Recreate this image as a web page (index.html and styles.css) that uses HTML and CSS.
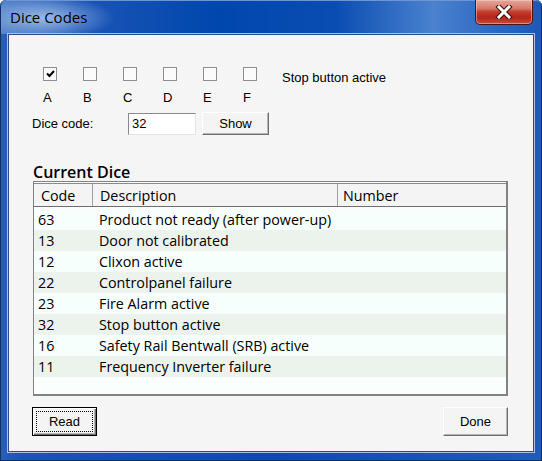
FILE: index.html
```
<!DOCTYPE html>
<html lang="en">
<head>
    <meta charset="UTF-8">
    <title>Dice Codes</title>
    <link rel="stylesheet" href="styles.css">
</head>
<body>

<div class="window">
    <div class="titlebar">
        <span class="title">Dice Codes</span>
        <button class="close" title="Close">
            <svg width="20" height="14" viewBox="0 0 20 14">
                <path d="M5 2 L15 12 M15 2 L5 12" stroke="#3a1010" stroke-width="5" stroke-linecap="square"/>
                <path d="M5 2 L15 12 M15 2 L5 12" stroke="#fff" stroke-width="3" stroke-linecap="square"/>
            </svg>
        </button>
    </div>

    <div class="client">
        <!-- dice selection -->
        <div class="dice-row">
            <div class="die">
                <span class="box">
                    <svg width="9" height="8" viewBox="0 0 9 8"><path d="M1 3.5 L3.5 6 L8 1" stroke="#000" stroke-width="2" fill="none"/></svg>
                </span>
                <span class="letter">A</span>
            </div>
            <div class="die"><span class="box"></span><span class="letter">B</span></div>
            <div class="die"><span class="box"></span><span class="letter">C</span></div>
            <div class="die"><span class="box"></span><span class="letter">D</span></div>
            <div class="die"><span class="box"></span><span class="letter">E</span></div>
            <div class="die"><span class="box"></span><span class="letter">F</span></div>
            <div class="stop-label">Stop button active</div>
        </div>

        <div class="code-row">
            <label for="dice-code">Dice code:</label>
            <input type="text" id="dice-code" value="32">
            <button class="btn show">Show</button>
        </div>

        <h3>Current Dice</h3>
        <div class="list">
            <div class="list-head">
                <div class="col-code">Code</div>
                <div class="col-desc">Description</div>
                <div class="col-num">Number</div>
            </div>
            <div class="list-body">
                <div class="row"><div class="col-code">63</div><div class="col-desc">Product not ready (after power-up)</div></div>
                <div class="row"><div class="col-code">13</div><div class="col-desc">Door not calibrated</div></div>
                <div class="row"><div class="col-code">12</div><div class="col-desc">Clixon active</div></div>
                <div class="row"><div class="col-code">22</div><div class="col-desc">Controlpanel failure</div></div>
                <div class="row"><div class="col-code">23</div><div class="col-desc">Fire Alarm active</div></div>
                <div class="row"><div class="col-code">32</div><div class="col-desc">Stop button active</div></div>
                <div class="row"><div class="col-code">16</div><div class="col-desc">Safety Rail Bentwall (SRB) active</div></div>
                <div class="row"><div class="col-code">11</div><div class="col-desc">Frequency Inverter failure</div></div>
            </div>
        </div>

        <div class="actions">
            <button class="btn default"><span class="focus">Read</span></button>
            <button class="btn">Done</button>
        </div>
    </div>
</div>

</body>
</html>
```

FILE: styles.css
```
body {
    margin: 0;
    font-family: "Liberation Sans", Arial, sans-serif;
    font-size: 13px;
    color: #000;
    background: #fff;
}
.window {
    width: 542px;
    height: 461px;
    box-sizing: border-box;
    padding: 0 8px 9px 8px;
    border-radius: 6px 6px 0 0;
    background: linear-gradient(to right, #2a5fb8 0%, #1a54b4 4%, #0c4aae 50%, #1f5bb8 100%);
    box-shadow: inset 0 0 0 1px #0f2f66;
    display: flex;
    flex-direction: column;
}
.titlebar {
    height: 34px;
    display: flex;
    align-items: flex-start;
    justify-content: space-between;
    margin: 0 -8px;
    border-radius: 6px 6px 0 0;
    background:
        radial-gradient(ellipse 70px 22px at 45px 18px, rgba(200, 220, 245, 0.7), rgba(200, 220, 245, 0) 100%),
        linear-gradient(to right, #4f7fc8 0%, #1c56b6 14%, #0047ad 40%, #0a4db2 62%, #4a82cf 80%, #2c66bf 92%, #1d58b7 100%);
    box-shadow: inset 0 1px 0 #6d95d3, inset 1px 0 0 #0f2f66, inset -1px 0 0 #0f2f66;
}
.title {
    font-family: "Open Sans", "Noto Sans", sans-serif;
    font-size: 15px;
    color: #000;
    margin: 7px 0 0 10px;
}
.close {
    width: 58px;
    height: 25px;
    margin-right: 9px;
    padding: 0;
    border: 1px solid #4a1610;
    border-top: none;
    border-radius: 0 0 5px 5px;
    background: linear-gradient(to bottom, #e4a699 0%, #d77a6c 35%, #c3392a 50%, #b3271a 75%, #c8503c 100%);
    box-shadow: inset 0 0 0 1px rgba(255, 220, 210, 0.45);
    display: flex;
    align-items: center;
    justify-content: center;
}
.client {
    flex: 1;
    background: #f5f5f5;
    border: 1px solid #2a4c7e;
    box-shadow: 0 0 0 1px #a9c1e6;
    display: flex;
    flex-direction: column;
}
.dice-row {
    display: flex;
    margin: 32px 0 0 34px;
}
.die {
    width: 40px;
    display: flex;
    flex-direction: column;
    align-items: flex-start;
}
.box {
    width: 14px;
    height: 14px;
    box-sizing: border-box;
    border: 1px solid #8f8f8f;
    background: #fbfbfb;
    display: flex;
    align-items: center;
    justify-content: center;
}
.letter {
    margin-top: 9px;
    line-height: 15px;
}
.stop-label {
    margin: 3px 0 0 -1px;
    line-height: 15px;
}
.code-row {
    display: flex;
    align-items: center;
    margin: 7px 0 0 23px;
}
.code-row label {
    width: 96px;
}
.code-row input {
    width: 68px;
    height: 22px;
    box-sizing: border-box;
    padding: 0 3px;
    font: inherit;
    background: #fff;
    border: 1px solid;
    border-color: #8a8a8a #e4e4e4 #e4e4e4 #8a8a8a;
    outline: none;
}
.btn {
    font: inherit;
    color: #000;
    background: #f4f4f4;
    border: 1px solid;
    border-color: #fff #6f6f6f #6f6f6f #fff;
    box-shadow: inset -1px -1px 0 #b5b5b5;
    padding: 0;
}
.show {
    width: 67px;
    height: 23px;
    margin-left: 6px;
}
h3 {
    font-family: "Open Sans", "Noto Sans", sans-serif;
    font-weight: 600;
    font-size: 16px;
    line-height: 18px;
    margin: 28px 0 0 24px;
}
.list {
    width: 475px;
    height: 215px;
    box-sizing: border-box;
    margin: 0 0 0 24px;
    border: 1px solid #828282;
    border-right-width: 2px;
    border-bottom-width: 2px;
    background: #fafffd;
    font-family: "Open Sans", "Noto Sans", sans-serif;
    font-size: 14.3px;
    display: flex;
    flex-direction: column;
}
.list-head {
    display: flex;
    height: 22px;
    align-items: center;
    margin-top: 1px;
    background: #f4f4f4;
    border-top: 1px solid #8a8a8a;
    border-bottom: 1px solid #6f6f6f;
}
.list-head div {
    height: 100%;
    display: flex;
    align-items: center;
}
.list-head .col-code {
    border-right: 1px solid #a0a0a0;
}
.list-head .col-desc {
    border-right: 1px solid #a0a0a0;
}
.col-code {
    width: 59px;
    padding-left: 7px;
    box-sizing: border-box;
}
.col-desc {
    width: 245px;
    padding-left: 7px;
    box-sizing: border-box;
}
.col-num {
    padding-left: 5px;
}
.list-body {
    padding-top: 2px;
}
.row {
    display: flex;
    height: 21px;
    align-items: center;
    background: #f6fffb;
}
.row:nth-child(even) {
    background: #ecf3ed;
}
.row .col-code {
    padding-left: 4px;
}
.row .col-desc {
    padding-left: 6px;
}
.actions {
    display: flex;
    justify-content: space-between;
    margin: 11px 25px 0 23px;
}
.actions .btn {
    width: 65px;
    height: 29px;
}
.btn.default {
    border: 1px solid #000;
    box-shadow: inset 1px 1px 0 #fff, inset -1px -1px 0 #6f6f6f, inset -2px -2px 0 #b5b5b5;
    padding: 3px;
}
.focus {
    display: flex;
    align-items: center;
    justify-content: center;
    height: 100%;
    box-sizing: border-box;
    border: 1px dotted #000;
}
```
